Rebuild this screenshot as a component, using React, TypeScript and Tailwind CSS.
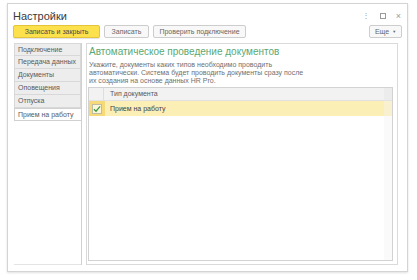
export default function App() {
  const tabs = ["Подключение", "Передача данных", "Документы", "Оповещения", "Отпуска", "Прием на работу"];
  return (
    <div className="w-[417px] h-[280px] bg-white pt-[3px] pl-[7px] font-['Liberation_Sans',Arial,sans-serif] text-[#555]">
      <div className="w-[401px] h-[269px] border border-[#d4d4d4] shadow-[0_1px_2px_rgba(0,0,0,0.12)] flex flex-col bg-white">
        {/* title */}
        <div className="h-[19px] flex items-end pl-[5px] pr-[6px]">
          <span className="text-[11px] leading-[14px] text-[#3a3a3a]">Настройки</span>
          <div className="ml-auto flex items-center gap-[10px] text-[#9a9a9a] text-[8px] leading-[12px] mb-[1px]">
            <span>⋮</span>
            <span className="w-[6px] h-[6px] border border-[#9a9a9a]" />
            <span className="text-[9px]">×</span>
          </div>
        </div>

        {/* command bar */}
        <div className="mt-[2px] h-[13px] flex pl-[5px] pr-[5px] gap-[4px] text-[7px] leading-[11px] whitespace-nowrap">
          <button className="w-[87px] h-[13px] rounded-[2px] bg-[#fde14c] border border-[#e3c43a] text-[#4a4a4a] shadow-[0_1px_1px_rgba(0,0,0,0.12)]">
            Записать и закрыть
          </button>
          <button className="w-[45px] h-[13px] rounded-[2px] bg-[#f8f8f8] border border-[#cdcdcd] text-[#666]">
            Записать
          </button>
          <button className="w-[93px] h-[13px] rounded-[2px] bg-[#f8f8f8] border border-[#cdcdcd] text-[#666]">
            Проверить подключение
          </button>
          <button className="ml-auto w-[33px] h-[13px] rounded-[2px] bg-[#f8f8f8] border border-[#cdcdcd] text-[#666] flex items-center justify-center gap-[3px]">
            Еще <span className="text-[4px]">▼</span>
          </button>
        </div>

        {/* body */}
        <div className="mt-[5px] flex-1 flex mb-[6px] mr-[9px]">
          <div className="ml-[6px] w-[67px] flex flex-col text-[7px] leading-[12px] text-[#5a5a5a] whitespace-nowrap">
            {tabs.map((t, i) => (
              <div
                key={t}
                className={
                  i === tabs.length - 1
                    ? "h-[13px] pl-[3px] bg-white border border-[#d0d0d0] border-r-0 overflow-hidden"
                    : "h-[13px] pl-[3px] bg-[#ededed] border border-[#d8d8d8] border-t-0 first:border-t overflow-hidden"
                }
              >
                {t}
              </div>
            ))}
            <div className="flex-1 border-b border-[#e4e4e4]" />
          </div>
          <div className="flex-1 border-l border-[#d0d0d0] pl-[4px] flex">
            <div className="flex-1 border border-[#dadada] flex flex-col pl-[1px] pr-[4px] pb-[3px]">
              <div className="pl-[1px] mt-[1px] text-[10px] leading-[13px] text-[#5aa874]">
                Автоматическое проведение документов
              </div>
              <div className="pl-[1px] mt-[3px] text-[7px] leading-[8px] text-[#707070]">
                Укажите, документы каких типов необходимо проводить
                <br />
                автоматически. Система будет проводить документы сразу после
                <br />
                их создания на основе данных HR Pro.
              </div>
              <div className="mt-[2px] flex-1 border border-[#d2d2d2] flex flex-col">
                <div className="h-[13px] flex bg-[#f2f2f2] border-b border-[#e2e2e2] text-[7px] leading-[12px] text-[#5a5a5a]">
                  <div className="w-[15px] border-r border-[#dedede]" />
                  <div className="pl-[6px] flex-1">Тип документа</div>
                  <div className="w-[8px] bg-[#ececec]" />
                </div>
                <div className="h-[15px] flex bg-[#fcefb6] text-[7px] leading-[15px] text-[#444]">
                  <div className="w-[16px] bg-[#f6da79] flex items-center justify-center">
                    <span className="w-[10px] h-[10px] border border-[#bdbda4] bg-[#fbf6dc] flex items-center justify-center">
                      <svg width="9" height="8" viewBox="0 0 9 8">
                        <path d="M1 4.2 L3.4 6.5 L8 1" fill="none" stroke="#3f9a3f" strokeWidth="1.4" />
                      </svg>
                    </span>
                  </div>
                  <div className="pl-[5px] flex-1">Прием на работу</div>
                  <div className="w-[8px] bg-[#f9f0cf]" />
                </div>
                <div className="flex-1 flex">
                  <div className="flex-1" />
                  <div className="w-[8px] bg-[#fafafa]" />
                </div>
              </div>
            </div>
          </div>
        </div>
      </div>
    </div>
  );
}
